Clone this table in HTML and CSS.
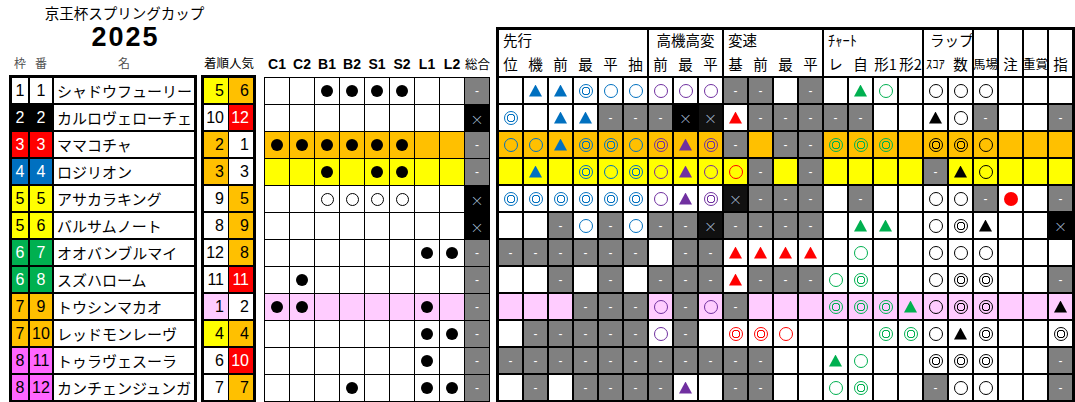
FILE: index.html
```html
<!DOCTYPE html>
<html lang="ja">
<head>
<meta charset="utf-8">
<title>京王杯スプリングカップ 2025</title>
<link rel="stylesheet" href="styles.css">
</head>
<body>
<div class="sheet">
  <div class="left">
    <div class="title">京王杯スプリングカップ</div>
    <div class="year">2025</div>
    <div class="left-blocks">
      <div class="blk-a">
        <div class="lab-a"><span>枠</span><span>番</span><span>名</span></div>
        <div class="grid-a">
          <div class="row f1"><div class="wk">1</div><div class="wk">1</div><div class="nm">シャドウフューリー</div></div>
          <div class="row f2"><div class="wk">2</div><div class="wk">2</div><div class="nm">カルロヴェローチェ</div></div>
          <div class="row f3"><div class="wk">3</div><div class="wk">3</div><div class="nm">ママコチャ</div></div>
          <div class="row f4"><div class="wk">4</div><div class="wk">4</div><div class="nm">ロジリオン</div></div>
          <div class="row f5"><div class="wk">5</div><div class="wk">5</div><div class="nm">アサカラキング</div></div>
          <div class="row f5"><div class="wk">5</div><div class="wk">6</div><div class="nm">バルサムノート</div></div>
          <div class="row f6"><div class="wk">6</div><div class="wk">7</div><div class="nm">オオバンブルマイ</div></div>
          <div class="row f6"><div class="wk">6</div><div class="wk">8</div><div class="nm">スズハローム</div></div>
          <div class="row f7"><div class="wk">7</div><div class="wk">9</div><div class="nm">トウシンマカオ</div></div>
          <div class="row f7"><div class="wk">7</div><div class="wk">10</div><div class="nm">レッドモンレーヴ</div></div>
          <div class="row f8"><div class="wk">8</div><div class="wk">11</div><div class="nm">トゥラヴェスーラ</div></div>
          <div class="row f8"><div class="wk">8</div><div class="wk">12</div><div class="nm">カンチェンジュンガ</div></div>
        </div>
      </div>
      <div class="blk-b">
        <div class="lab-b"><span>着順</span><span>人気</span></div>
        <div class="grid-b">
          <div class="rk by">5</div><div class="rk bo">6</div>
          <div class="rk">10</div><div class="rk br">12</div>
          <div class="rk bo">2</div><div class="rk">1</div>
          <div class="rk bo">3</div><div class="rk">3</div>
          <div class="rk">9</div><div class="rk bo">5</div>
          <div class="rk">8</div><div class="rk bo">9</div>
          <div class="rk">12</div><div class="rk bo">8</div>
          <div class="rk">11</div><div class="rk br">11</div>
          <div class="rk bp">1</div><div class="rk">2</div>
          <div class="rk by">4</div><div class="rk bo">4</div>
          <div class="rk">6</div><div class="rk br">10</div>
          <div class="rk">7</div><div class="rk bo">7</div>
        </div>
      </div>
    </div>
  </div>

  <div class="blk-c">
    <div class="lab-c"><span>C1</span><span>C2</span><span>B1</span><span>B2</span><span>S1</span><span>S2</span><span>L1</span><span>L2</span><span class="jp">総合</span></div>
    <div class="grid-c">
      <div class="row"><div class="c"></div><div class="c"></div><div class="c"><i class="dot"></i></div><div class="c"><i class="dot"></i></div><div class="c"><i class="dot"></i></div><div class="c"><i class="dot"></i></div><div class="c"></div><div class="c"></div><div class="c g">-</div></div>
      <div class="row"><div class="c"></div><div class="c"></div><div class="c"></div><div class="c"></div><div class="c"></div><div class="c"></div><div class="c"></div><div class="c"></div><div class="c x">×</div></div>
      <div class="row ro"><div class="c"><i class="dot"></i></div><div class="c"><i class="dot"></i></div><div class="c"><i class="dot"></i></div><div class="c"><i class="dot"></i></div><div class="c"><i class="dot"></i></div><div class="c"><i class="dot"></i></div><div class="c"></div><div class="c"></div><div class="c g">-</div></div>
      <div class="row ry"><div class="c"></div><div class="c"></div><div class="c"><i class="dot"></i></div><div class="c"></div><div class="c"><i class="dot"></i></div><div class="c"><i class="dot"></i></div><div class="c"></div><div class="c"></div><div class="c g">-</div></div>
      <div class="row"><div class="c"></div><div class="c"></div><div class="c"><i class="o sm"></i></div><div class="c"><i class="o sm"></i></div><div class="c"><i class="o sm"></i></div><div class="c"><i class="o sm"></i></div><div class="c"></div><div class="c"></div><div class="c x">×</div></div>
      <div class="row"><div class="c"></div><div class="c"></div><div class="c"></div><div class="c"></div><div class="c"></div><div class="c"></div><div class="c"></div><div class="c"></div><div class="c x">×</div></div>
      <div class="row"><div class="c"></div><div class="c"></div><div class="c"></div><div class="c"></div><div class="c"></div><div class="c"></div><div class="c"><i class="dot"></i></div><div class="c"><i class="dot"></i></div><div class="c g">-</div></div>
      <div class="row"><div class="c"></div><div class="c"><i class="dot"></i></div><div class="c"></div><div class="c"></div><div class="c"></div><div class="c"></div><div class="c"></div><div class="c"></div><div class="c g">-</div></div>
      <div class="row rp"><div class="c"><i class="dot"></i></div><div class="c"><i class="dot"></i></div><div class="c"></div><div class="c"></div><div class="c"></div><div class="c"></div><div class="c"><i class="dot"></i></div><div class="c"></div><div class="c g">-</div></div>
      <div class="row"><div class="c"></div><div class="c"></div><div class="c"></div><div class="c"></div><div class="c"></div><div class="c"></div><div class="c"><i class="dot"></i></div><div class="c"><i class="dot"></i></div><div class="c g">-</div></div>
      <div class="row"><div class="c"></div><div class="c"></div><div class="c"></div><div class="c"></div><div class="c"></div><div class="c"></div><div class="c"><i class="dot"></i></div><div class="c"></div><div class="c g">-</div></div>
      <div class="row"><div class="c"></div><div class="c"></div><div class="c"></div><div class="c"><i class="dot"></i></div><div class="c"></div><div class="c"></div><div class="c"><i class="dot"></i></div><div class="c"><i class="dot"></i></div><div class="c g">-</div></div>
    </div>
  </div>

  <div class="blk-d">
    <div class="grid-d">
      <div class="hc span6"><div class="ht">先行</div><div class="hs"><span>位</span><span>機</span><span>前</span><span>最</span><span>平</span><span>抽</span></div></div>
      <div class="hc span3"><div class="ht center">高機高変</div><div class="hs"><span>前</span><span>最</span><span>平</span></div></div>
      <div class="hc span4"><div class="ht">変速</div><div class="hs"><span>基</span><span>前</span><span>最</span><span>平</span></div></div>
      <div class="hc span4"><div class="ht">ﾁｬｰﾄ</div><div class="hs"><span>レ</span><span>自</span><span>形1</span><span>形2</span></div></div>
      <div class="hc span2"><div class="ht wide">ラップ</div><div class="hs"><span class="half">ｽｺｱ</span><span>数</span></div></div>
      <div class="hc"><div class="ht"></div><div class="hs"><span class="two">馬場</span></div></div>
      <div class="hc"><div class="ht"></div><div class="hs"><span>注</span></div></div>
      <div class="hc"><div class="ht"></div><div class="hs"><span class="two">重賞</span></div></div>
      <div class="hc"><div class="ht"></div><div class="hs"><span>指</span></div></div>

      <div class="row">
        <div class="c"></div><div class="c"><i class="tri cb"></i></div><div class="c"><i class="tri cb"></i></div><div class="c"><i class="oo cb"></i></div><div class="c"><i class="o cb"></i></div><div class="c"><i class="o cb"></i></div>
        <div class="c"><i class="o cp"></i></div><div class="c"><i class="o cp"></i></div><div class="c"><i class="o cp"></i></div>
        <div class="c g">-</div><div class="c g">-</div><div class="c"></div><div class="c g">-</div>
        <div class="c"></div><div class="c"><i class="tri cg"></i></div><div class="c"><i class="o cg"></i></div><div class="c"></div>
        <div class="c"><i class="o ck"></i></div><div class="c"><i class="o ck"></i></div>
        <div class="c"><i class="o ck"></i></div><div class="c"></div><div class="c"></div><div class="c"></div>
      </div>
      <div class="row">
        <div class="c"><i class="oo cb"></i></div><div class="c"></div><div class="c"><i class="tri cb"></i></div><div class="c"><i class="tri cb"></i></div><div class="c g">-</div><div class="c g">-</div>
        <div class="c g">-</div><div class="c x">×</div><div class="c x dk">×</div>
        <div class="c"><i class="tri cr"></i></div><div class="c g">-</div><div class="c g">-</div><div class="c g">-</div>
        <div class="c g">-</div><div class="c g">-</div><div class="c"></div><div class="c"></div>
        <div class="c"><i class="tri ck"></i></div><div class="c"><i class="o ck"></i></div>
        <div class="c g">-</div><div class="c"></div><div class="c"></div><div class="c g">-</div>
      </div>
      <div class="row ro">
        <div class="c"><i class="o cb"></i></div><div class="c"><i class="o cb"></i></div><div class="c"><i class="tri cb"></i></div><div class="c"><i class="oo cb"></i></div><div class="c"><i class="oo cb"></i></div><div class="c"><i class="o cb"></i></div>
        <div class="c"><i class="oo cp"></i></div><div class="c"><i class="tri cp"></i></div><div class="c"><i class="oo cp"></i></div>
        <div class="c g">-</div><div class="c"></div><div class="c g">-</div><div class="c g">-</div>
        <div class="c"><i class="oo cg"></i></div><div class="c"><i class="oo cg"></i></div><div class="c"><i class="oo cg"></i></div><div class="c"></div>
        <div class="c"><i class="oo ck"></i></div><div class="c"><i class="oo ck"></i></div>
        <div class="c"><i class="o ck"></i></div><div class="c"></div><div class="c"></div><div class="c"></div>
      </div>
      <div class="row ry">
        <div class="c"></div><div class="c"><i class="tri cb"></i></div><div class="c"></div><div class="c"><i class="oo cb"></i></div><div class="c"><i class="o cb"></i></div><div class="c"><i class="oo cb"></i></div>
        <div class="c"><i class="o cp"></i></div><div class="c"><i class="tri cp"></i></div><div class="c"><i class="o cp"></i></div>
        <div class="c"><i class="o cr"></i></div><div class="c g">-</div><div class="c"></div><div class="c g">-</div>
        <div class="c"></div><div class="c"></div><div class="c"></div><div class="c"></div>
        <div class="c g">-</div><div class="c"><i class="tri ck"></i></div>
        <div class="c"><i class="o ck"></i></div><div class="c"></div><div class="c"></div><div class="c"></div>
      </div>
      <div class="row">
        <div class="c"><i class="oo cb"></i></div><div class="c"><i class="oo cb"></i></div><div class="c"><i class="oo cb"></i></div><div class="c"><i class="oo cb"></i></div><div class="c"><i class="oo cb"></i></div><div class="c"><i class="oo cb"></i></div>
        <div class="c"><i class="o cp"></i></div><div class="c"><i class="tri cp"></i></div><div class="c"><i class="oo cp"></i></div>
        <div class="c x dk">×</div><div class="c g">-</div><div class="c g">-</div><div class="c g">-</div>
        <div class="c"></div><div class="c g">-</div><div class="c"></div><div class="c"></div>
        <div class="c"><i class="o ck"></i></div><div class="c"><i class="o ck"></i></div>
        <div class="c g">-</div><div class="c"><i class="dot big cr"></i></div><div class="c"></div><div class="c g">-</div>
      </div>
      <div class="row">
        <div class="c"></div><div class="c"></div><div class="c g">-</div><div class="c"><i class="o cb"></i></div><div class="c g">-</div><div class="c"><i class="o cb"></i></div>
        <div class="c g">-</div><div class="c g">-</div><div class="c x dk">×</div>
        <div class="c g">-</div><div class="c g">-</div><div class="c g">-</div><div class="c g">-</div>
        <div class="c"></div><div class="c"><i class="tri cg"></i></div><div class="c"><i class="tri cg"></i></div><div class="c"></div>
        <div class="c"><i class="o ck"></i></div><div class="c"><i class="oo ck"></i></div>
        <div class="c"><i class="tri ck"></i></div><div class="c"></div><div class="c"></div><div class="c x">×</div>
      </div>
      <div class="row">
        <div class="c g">-</div><div class="c g">-</div><div class="c g">-</div><div class="c g">-</div><div class="c g">-</div><div class="c g">-</div>
        <div class="c"></div><div class="c g">-</div><div class="c g">-</div>
        <div class="c"><i class="tri cr"></i></div><div class="c"><i class="tri cr"></i></div><div class="c"><i class="tri cr"></i></div><div class="c"><i class="tri cr"></i></div>
        <div class="c"></div><div class="c"><i class="o cg"></i></div><div class="c"></div><div class="c"></div>
        <div class="c"><i class="o ck"></i></div><div class="c"><i class="o ck"></i></div>
        <div class="c"><i class="o ck"></i></div><div class="c"></div><div class="c"></div><div class="c"></div>
      </div>
      <div class="row">
        <div class="c"></div><div class="c"></div><div class="c g">-</div><div class="c"></div><div class="c g">-</div><div class="c"></div>
        <div class="c g">-</div><div class="c g">-</div><div class="c g">-</div>
        <div class="c"><i class="tri cr"></i></div><div class="c g">-</div><div class="c g">-</div><div class="c g">-</div>
        <div class="c"><i class="o cg"></i></div><div class="c"><i class="oo cg"></i></div><div class="c"></div><div class="c"></div>
        <div class="c"><i class="o ck"></i></div><div class="c"><i class="oo ck"></i></div>
        <div class="c"><i class="oo ck"></i></div><div class="c"></div><div class="c"></div><div class="c g">-</div>
      </div>
      <div class="row rp">
        <div class="c"></div><div class="c"></div><div class="c"></div><div class="c g">-</div><div class="c g">-</div><div class="c g">-</div>
        <div class="c"><i class="o cp"></i></div><div class="c g">-</div><div class="c"><i class="o cp"></i></div>
        <div class="c g">-</div><div class="c"></div><div class="c"></div><div class="c"></div>
        <div class="c"><i class="oo cg"></i></div><div class="c"><i class="oo cg"></i></div><div class="c"><i class="oo cg"></i></div><div class="c"><i class="tri cg"></i></div>
        <div class="c"><i class="o ck"></i></div><div class="c"><i class="oo ck"></i></div>
        <div class="c"><i class="oo ck"></i></div><div class="c"></div><div class="c"></div><div class="c"><i class="tri ck"></i></div>
      </div>
      <div class="row">
        <div class="c"></div><div class="c g">-</div><div class="c g">-</div><div class="c g">-</div><div class="c g">-</div><div class="c g">-</div>
        <div class="c"><i class="o cp"></i></div><div class="c g">-</div><div class="c"></div>
        <div class="c"><i class="oo cr"></i></div><div class="c"><i class="oo cr"></i></div><div class="c"><i class="o cr"></i></div><div class="c"></div>
        <div class="c"></div><div class="c"></div><div class="c"><i class="oo cg"></i></div><div class="c"><i class="oo cg"></i></div>
        <div class="c"><i class="o ck"></i></div><div class="c"><i class="tri ck"></i></div>
        <div class="c"><i class="oo ck"></i></div><div class="c"></div><div class="c"></div><div class="c"><i class="oo ck"></i></div>
      </div>
      <div class="row">
        <div class="c g">-</div><div class="c g">-</div><div class="c g">-</div><div class="c g">-</div><div class="c g">-</div><div class="c g">-</div>
        <div class="c g">-</div><div class="c g">-</div><div class="c g">-</div>
        <div class="c g">-</div><div class="c g">-</div><div class="c"></div><div class="c"></div>
        <div class="c"><i class="tri cg"></i></div><div class="c"><i class="o cg"></i></div><div class="c"></div><div class="c"></div>
        <div class="c"><i class="oo ck"></i></div><div class="c"><i class="oo ck"></i></div>
        <div class="c"><i class="oo ck"></i></div><div class="c"></div><div class="c"></div><div class="c g">-</div>
      </div>
      <div class="row">
        <div class="c"></div><div class="c g">-</div><div class="c"></div><div class="c g">-</div><div class="c g">-</div><div class="c g">-</div>
        <div class="c g">-</div><div class="c"><i class="tri cp"></i></div><div class="c"></div>
        <div class="c g">-</div><div class="c g">-</div><div class="c"></div><div class="c"></div>
        <div class="c"><i class="o cg"></i></div><div class="c"><i class="oo cg"></i></div><div class="c"></div><div class="c"></div>
        <div class="c g">-</div><div class="c"><i class="o ck"></i></div>
        <div class="c"><i class="o ck"></i></div><div class="c"></div><div class="c"></div><div class="c g">-</div>
      </div>
    </div>
  </div>
</div>
</body>
</html>
```
FILE: styles.css
```css
* { box-sizing: border-box; }
html, body { margin: 0; padding: 0; background: #fff; }
body {
  width: 1075px;
  height: 402px;
  overflow: hidden;
  font-family: "Noto Sans CJK JP", "Noto Sans", sans-serif;
  color: #000;
}
.sheet { display: flex; align-items: flex-start; padding-left: 9px; }

/* left group: title + names + ranks */
.left { display: flex; flex-direction: column; width: 247px; }
.title {
  margin-top: 3px; height: 20px; line-height: 20px;
  text-align: center; padding-right: 16px;
  font-size: 14.5px; white-space: nowrap;
}
.year {
  height: 28px; line-height: 28px; text-align: center; padding-right: 14px;
  font-family: "Liberation Sans", Arial, sans-serif; font-weight: bold; font-size: 27px;
  letter-spacing: 2px;
}
.left-blocks { display: flex; align-items: flex-start; gap: 4px; }

.row { display: contents; }

/* block A */
.lab-a {
  display: grid; grid-template-columns: 16px 22px 140px; column-gap: 2px;
  padding: 0 3px; height: 24px; line-height: 24px;
  font-size: 12px; color: #505050; text-align: center;
}
.grid-a {
  display: grid; grid-template-columns: 16px 22px 140px; grid-auto-rows: 25px;
  gap: 2px; padding: 3px; background: #000;
}
.wk {
  background: var(--fb, #fff); color: var(--ff, #000);
  font-family: "Liberation Sans", Arial, sans-serif; font-size: 16px;
  display: flex; align-items: center; justify-content: center;
}
.nm {
  background: #fff; font-size: 15px; padding-left: 3px;
  display: flex; align-items: center; white-space: nowrap;
}
.f1 { --fb: #fff; --ff: #000; }
.f2 { --fb: #000; --ff: #fff; }
.f3 { --fb: #ff0000; --ff: #fff; }
.f4 { --fb: #0070c0; --ff: #fff; }
.f5 { --fb: #ffff00; --ff: #000; }
.f6 { --fb: #00b050; --ff: #fff; }
.f7 { --fb: #ffc000; --ff: #000; }
.f8 { --fb: #ff66ff; --ff: #000; }

/* block B */
.lab-b {
  display: grid; grid-template-columns: 25px 24px; padding: 0 3px;
  height: 24px; line-height: 24px; font-size: 12.5px; text-align: center; white-space: nowrap;
}
.grid-b {
  display: grid; grid-template-columns: 24px 24px; grid-auto-rows: 25px;
  row-gap: 2px; column-gap: 1px; padding: 3px; background: #000;
}
.rk {
  background: #fff; font-family: "Liberation Sans", Arial, sans-serif; font-size: 16px;
  display: flex; align-items: center; justify-content: flex-end; padding-right: 4px;
}
.by { background: #ffff00; }
.bo { background: #ffc000; }
.br { background: #ff0000; color: #fff; }
.bp { background: #ffccff; }

/* block C */
.blk-c { margin-left: 8px; margin-top: 51px; }
.lab-c {
  display: grid; grid-template-columns: repeat(9, 24px); column-gap: 1px; padding: 0 1px;
  height: 26px; line-height: 26px; text-align: center; white-space: nowrap;
  font-family: "Liberation Sans", Arial, sans-serif; font-weight: bold; font-size: 14px;
}
.lab-c .jp { font-family: "Noto Sans CJK JP", sans-serif; font-weight: normal; font-size: 12.5px; }
.grid-c {
  display: grid; grid-template-columns: repeat(9, 24px); grid-auto-rows: 26px;
  gap: 1px; padding: 1px; background: #000;
}

/* block D */
.blk-d { margin-left: 6px; margin-top: 27px; }
.grid-d {
  display: grid; grid-template-columns: repeat(23, 23px);
  grid-template-rows: 46px repeat(12, 25px);
  gap: 2px; padding: 3px; background: #000;
}
.hc {
  background: #fff; display: flex; flex-direction: column; justify-content: space-between;
  font-size: 14.5px; white-space: nowrap; min-width: 0;
}
.span2 { grid-column: span 2; }
.span3 { grid-column: span 3; }
.span4 { grid-column: span 4; }
.span6 { grid-column: span 6; }
.ht { height: 20px; line-height: 20px; padding-left: 4px; }
.ht.center { text-align: center; padding-left: 0; }
.ht.wide { padding-left: 6px; }
.hs {
  height: 24px; line-height: 24px; display: grid; grid-auto-flow: column;
  grid-auto-columns: 23px; column-gap: 2px; text-align: center;
}
.hs span { display: flex; justify-content: center; overflow: visible; }
.hs .two { font-size: 12.5px; }
.hs .half { font-size: 12.5px; }

/* cells */
.c {
  background: var(--bg, #fff);
  display: flex; align-items: center; justify-content: center;
}
.ro { --bg: #ffc000; }
.ry { --bg: #ffff00; }
.rp { --bg: #ffccff; }
.c.g {
  background: #808080; color: #fff;
  font-family: "Liberation Sans", Arial, sans-serif; font-size: 12px;
}
.c.x {
  background: #000; color: #b8cde0;
  font-family: "Noto Sans CJK JP", sans-serif; font-weight: 300; font-size: 13px;
}
.c.x.dk { background: #111; }

/* symbols */
.c i { display: block; flex: none; }
.o {
  width: 14px; height: 14px; border: 1px solid currentColor; border-radius: 50%;
}
.o.sm { width: 13px; height: 13px; }
.oo {
  width: 14px; height: 14px; border: 1px solid currentColor; border-radius: 50%;
  background: radial-gradient(circle, transparent 3.1px, currentColor 3.5px, currentColor 4.1px, transparent 4.5px);
}
.tri {
  width: 13px; height: 12px; background: currentColor;
  clip-path: polygon(50% 0, 100% 100%, 0 100%);
}
.dot { width: 12px; height: 12px; border-radius: 50%; background: currentColor; }
.dot.big { width: 14px; height: 14px; }
.cb { color: #0070c0; }
.cp { color: #7030a0; }
.cr { color: #ff0000; }
.cg { color: #00b050; }
.ck { color: #000; }
```
